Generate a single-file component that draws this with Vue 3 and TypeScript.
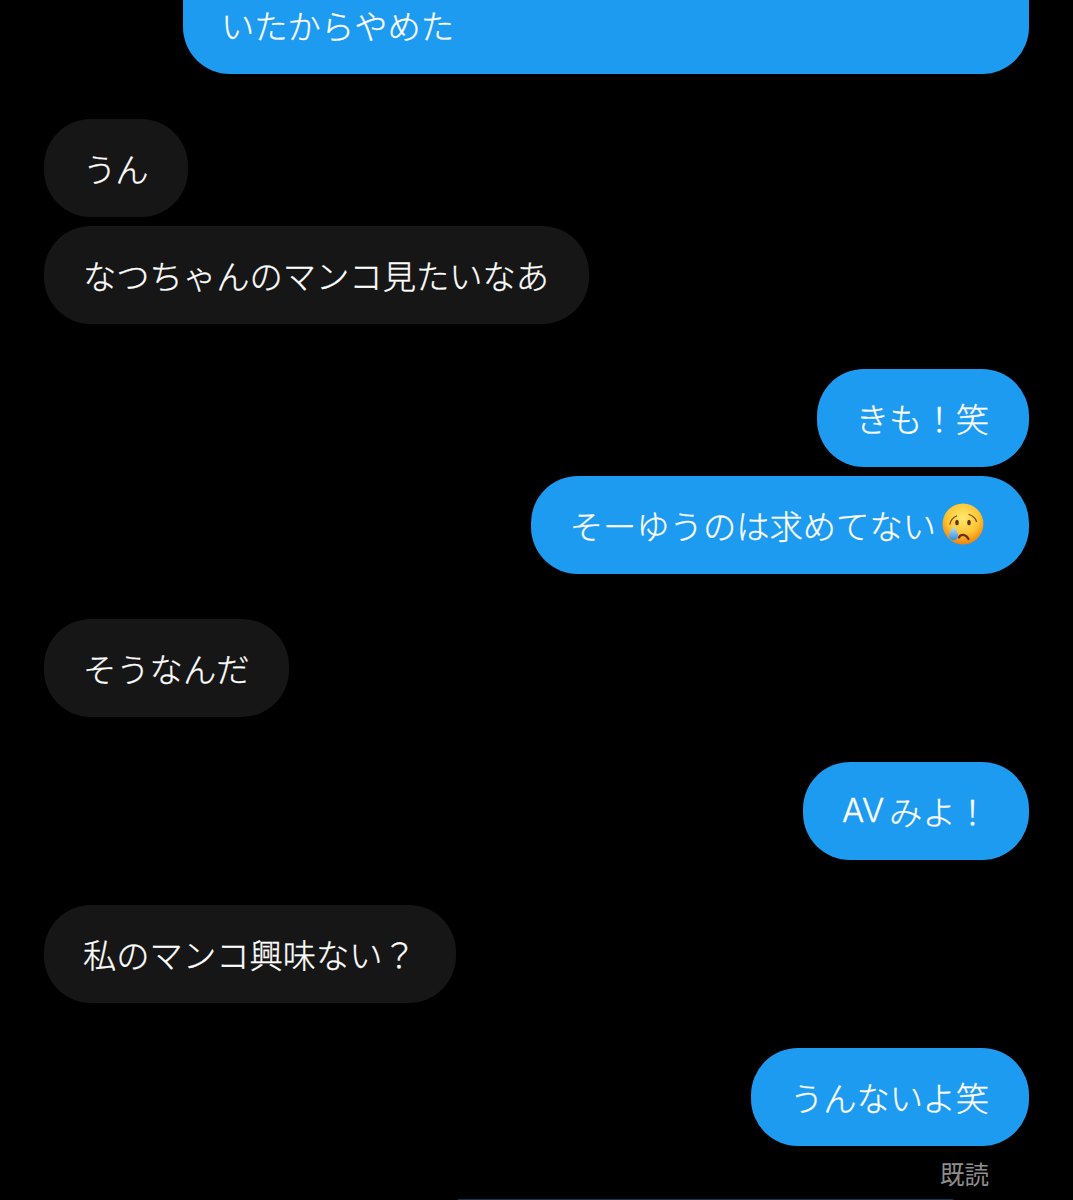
<script setup lang="ts">
type Bubble = { text: string; latin?: string; emoji?: boolean; tight?: boolean };
type Group = { mine: boolean; bubbles: Bubble[] };

const groups: Group[] = [
  { mine: false, bubbles: [{ text: 'うん', tight: true }, { text: 'なつちゃんのマンコ見たいなあ' }] },
  { mine: true, bubbles: [{ text: 'きも！笑' }, { text: 'そーゆうのは求めてない', emoji: true }] },
  { mine: false, bubbles: [{ text: 'そうなんだ' }] },
  { mine: true, bubbles: [{ text: 'みよ！', latin: 'AV' }] },
  { mine: false, bubbles: [{ text: '私のマンコ興味ない？' }] },
  { mine: true, bubbles: [{ text: 'うんないよ笑' }] },
];
</script>

<template>
  <div class="thread">
    <div class="group mine">
      <div class="bubble cut">いたからやめた</div>
    </div>

    <div
      v-for="(group, i) in groups"
      :key="i"
      class="group"
      :class="{ mine: group.mine }"
    >
      <div
        v-for="bubble in group.bubbles"
        :key="bubble.text"
        class="bubble"
        :class="{ tight: bubble.tight }"
      >
        <span v-if="bubble.latin" class="latin">{{ bubble.latin }}</span>
        {{ bubble.text }}
        <svg v-if="bubble.emoji" class="emoji" viewBox="0 0 44 44">
          <defs>
            <radialGradient id="face" cx="50%" cy="35%" r="65%">
              <stop offset="0%" stop-color="#ffe770" />
              <stop offset="60%" stop-color="#fdc634" />
              <stop offset="100%" stop-color="#f0800e" />
            </radialGradient>
            <linearGradient id="tear" x1="0" y1="0" x2="0" y2="1">
              <stop offset="0%" stop-color="#b4e4fb" />
              <stop offset="100%" stop-color="#2f8fe0" />
            </linearGradient>
          </defs>
          <circle cx="22" cy="22" r="20.500" fill="url(#face)" />
          <path d="M9 22c.6-3.500 3-6.500 6.500-8M28 12.500c3.400 1 6.400 3.600 7.500 7" fill="none" stroke="#7a4514" stroke-width="1.300" stroke-linecap="round" />
          <ellipse cx="16" cy="20.500" rx="1.800" ry="2.800" fill="#5b3413" />
          <ellipse cx="28" cy="20.500" rx="1.800" ry="2.800" fill="#5b3413" />
          <path d="M18 35.500c1.500-3.500 6.500-4 9.500 1.500" fill="none" stroke="#6d2f10" stroke-width="2.200" stroke-linecap="round" />
          <path d="M12.500 24.500c2.600 3.600 4.600 6.400 4.600 9.200a4.600 4.600 0 0 1-9.200 0c0-2.800 2-5.600 4.600-9.200z" fill="url(#tear)" />
        </svg>
      </div>
      <div v-if="i === groups.length - 1" class="receipt">既読</div>
      <div v-if="i === groups.length - 1" class="next-edge"></div>
    </div>
  </div>
</template>

<style>
html,
body {
  background: #000;
}
</style>

<style scoped>
.thread {
  width: 1073px;
  height: 1200px;
  overflow: hidden;
  box-sizing: border-box;
  padding: 0 44px;
  display: flex;
  flex-direction: column;
  gap: 45px;
  background: #000;
  font-family: "Noto Sans CJK JP", "Liberation Sans", sans-serif;
}

.group {
  display: flex;
  flex-direction: column;
  align-items: flex-start;
  gap: 9px;
}

.group.mine {
  align-items: flex-end;
}

.bubble {
  display: flex;
  align-items: center;
  height: 98px;
  box-sizing: border-box;
  padding: 0 40px 2px 39px;
  border-radius: 47px;
  background: #161616;
  color: #fff;
  font-size: 33.3px;
  font-weight: 300;
  -webkit-text-stroke: 0.3px #fff;
  white-space: nowrap;
}

.bubble.tight {
  letter-spacing: -1px;
}

.mine .bubble {
  background: #1d9bf0;
}

.bubble.cut {
  width: 846px;
  height: 74px;
  padding: 0 0 26px 38px;
  border-radius: 0 0 47px 47px;
}

.latin {
  margin-right: 5px;
  font-family: "Inter", "Liberation Sans", sans-serif;
  font-size: 33px;
  font-weight: 300;
}

.emoji {
  width: 44px;
  height: 44px;
  margin-left: 5px;
  margin-right: 4px;
}

.receipt {
  margin: 5px 40px 0 0;
  color: #8e8e8e;
  font-size: 24.5px;
  line-height: 28px;
}

.next-edge {
  width: 495px;
  height: 1px;
  margin: 2px 76px 0 0;
  background: #0c3a5a;
}
</style>
